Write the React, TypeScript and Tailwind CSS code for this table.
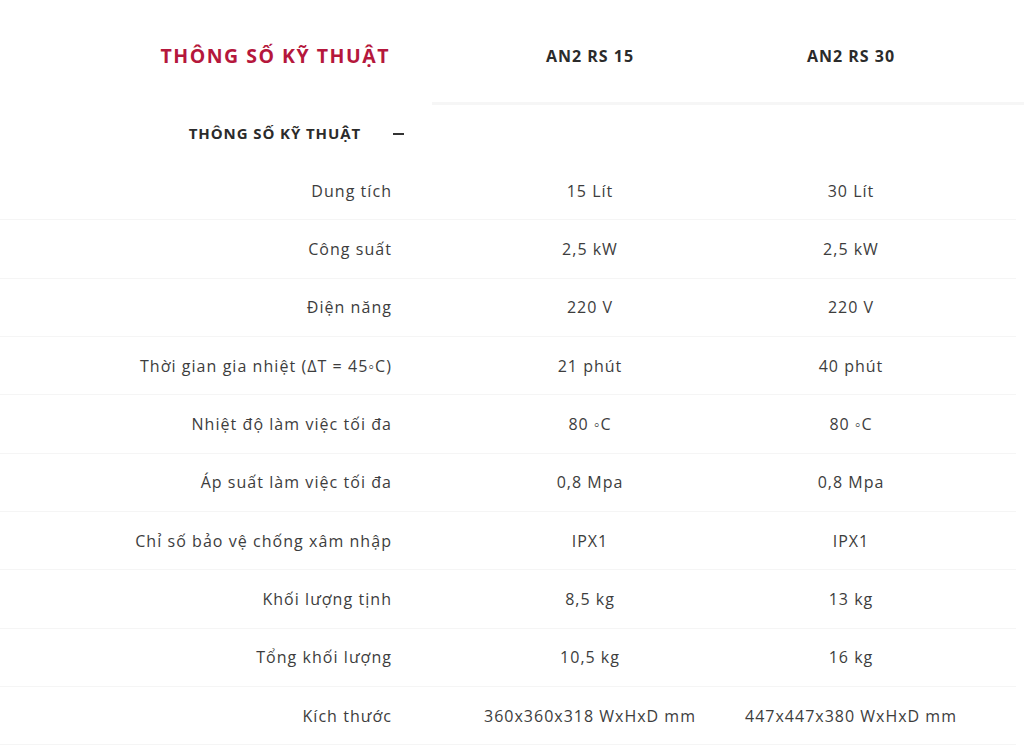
import React from 'react';

const rows: [string, string, string][] = [
  ['Dung tích', '15 Lít', '30 Lít'],
  ['Công suất', '2,5 kW', '2,5 kW'],
  ['Điện năng', '220 V', '220 V'],
  ['Thời gian gia nhiệt (ΔT = 45◦C)', '21 phút', '40 phút'],
  ['Nhiệt độ làm việc tối đa', '80 ◦C', '80 ◦C'],
  ['Áp suất làm việc tối đa', '0,8 Mpa', '0,8 Mpa'],
  ['Chỉ số bảo vệ chống xâm nhập', 'IPX1', 'IPX1'],
  ['Khối lượng tịnh', '8,5 kg', '13 kg'],
  ['Tổng khối lượng', '10,5 kg', '16 kg'],
  ['Kích thước', '360x360x318 WxHxD mm', '447x447x380 WxHxD mm'],
];

const App: React.FC = () => {
  return (
    <div
      className="w-[1024px] h-[753px] bg-white overflow-hidden text-[#3d3d3d]"
      style={{ fontFamily: '"Open Sans", "Noto Sans", sans-serif' }}
    >
      <div className="w-[1016px]">
        {/* header */}
        <div className="flex h-[102px] items-center pt-[10px]">
          <div className="w-[420px] pr-[30px] text-right text-[19.5px] font-bold tracking-[1.5px] text-[#b5173c]">
            THÔNG SỐ KỸ THUẬT
          </div>
          <div className="w-[340px] flex justify-center text-[16px] font-bold tracking-[1px] text-[#2b2b2b]">
            AN2 RS 15
          </div>
          <div className="w-[182px] flex justify-center text-[16px] font-bold tracking-[1px] text-[#2b2b2b]">
            AN2 RS 30
          </div>
        </div>
        <div className="ml-[432px] w-[592px] h-[3px] bg-[#f6f6f6]" />

        {/* section toggle */}
        <div className="flex h-[57px] items-center">
          <div className="w-[420px] flex items-center justify-end pr-[16px]">
            <span className="text-[15px] font-bold tracking-[0.9px] text-[#2b2b2b] mr-[32px]">
              THÔNG SỐ KỸ THUẬT
            </span>
            <span className="w-[11px] h-[2px] bg-[#333]" />
          </div>
        </div>

        {rows.map(([label, a, b]) => (
          <div key={label} className="flex h-[58.33px] items-center border-b border-[#f5f5f5]">
            <div className="w-[420px] pr-[28px] text-right text-[16px] tracking-[1.05px] whitespace-nowrap">
              {label}
            </div>
            <div className="w-[340px] flex justify-center text-[16px] tracking-[1px] whitespace-nowrap">
              {a}
            </div>
            <div className="w-[182px] flex justify-center text-[16px] tracking-[1px] whitespace-nowrap">
              {b}
            </div>
          </div>
        ))}
      </div>
    </div>
  );
};

export default App;
